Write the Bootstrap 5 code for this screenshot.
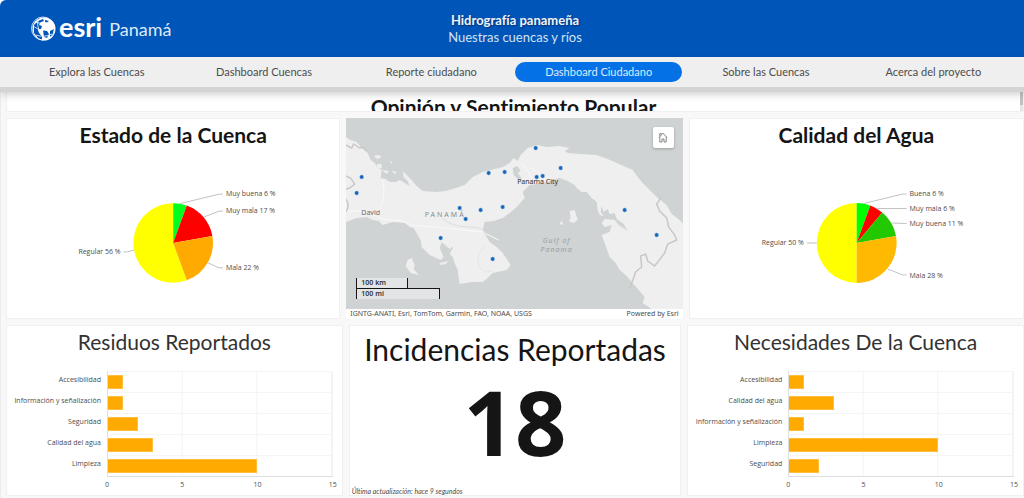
<!DOCTYPE html>
<html lang="es">
<head>
<meta charset="utf-8">
<meta name="viewport" content="width=device-width, initial-scale=1">
<title>Hidrografía panameña</title>
<link rel="stylesheet" href="https://cdn.jsdelivr.net/npm/bootstrap@5.3.0/dist/css/bootstrap.min.css">
<style>
  body { font-family: Lato, "Open Sans", sans-serif; font-variant-ligatures: none; color: #151515; background: #f8f8f8; min-height: 100vh; }
  .site-head { background: #0055b8; min-height: 57px; display: grid; grid-template-columns: 1fr auto 1fr; padding: 0 24px 0 30px; border-top-left-radius: 6px; color: #fff; }
  .corner { background: #fff; }
  .brand { color: #fff; gap: 2px; }
  .brand-name { font: 700 27px/32px Lato, sans-serif; margin-top: -4px; }
  .brand-country { font-size: 18px; line-height: 24px; margin-left: 5px; color: #dfeaf7; }
  .head-title { font-size: 13px; line-height: 17px; font-weight: 700; text-shadow: 1px 1px 2px #002f70; color: #eef4fb; }
  .head-sub { font-size: 13px; line-height: 17px; color: #d3e2f4; }
  .site-nav { background: #efefef; min-height: 30px; padding: 0 7px 0 13px; box-shadow: 0 5px 0 #d4d4d4, 0 6px 10px rgba(0,0,0,.25); z-index: 2; }
  .site-nav .nav-link { font-size: 11px; line-height: 20px; padding: 0; color: #4c4c4c; border-radius: 10px; text-align: center; }
  .site-nav .nav-link.active { background: #0571e6; color: #dcebfc; }
  .board { padding: 5px 0 2px 5px; border-left: 1px solid #ececec; gap: 6px; }
  .panel { background: #fff; border: 1px solid #f0f0f0; min-width: 0; }
  .banner { height: 20px; overflow: hidden; border-top: 0; }
  .banner-scroll { width: 3px; background: linear-gradient(#c1c1c1 13px, #e4e4e4 13px); }
  .panel-title { font-size: 21px; line-height: 24px; font-weight: 700; margin: 0; text-align: center; }
  .banner .panel-title { line-height: 30px; }
  .panel-title.light { font-weight: 400; color: #323232; }
  .grid-top { display: grid; grid-template-columns: 335fr 337fr 336fr; gap: 6px; }
  .grid-low { display: grid; grid-template-columns: 337fr 333fr 337fr; gap: 6px; }
  .pie { height: 164px; width: 100%; display: block; }
  .pie text { font-family: "Open Sans", sans-serif; font-size: 7px; fill: #4c4c4c; }
  .pie polyline { fill: none; stroke: #c2c2c2; stroke-width: 1; }
  .map-box { height: 191px; }
  .map-art { width: 100%; height: 100%; display: block; }
  .map-art text { font-family: "Noto Sans", sans-serif; }
  .home-btn { top: 9px; right: 9px; width: 21px; height: 21px; padding: 0; border-radius: 2px; background: #fff; border: 0; box-shadow: 0 1px 3px rgba(0,0,0,.25); }
  .scale-bar { left: 10px; bottom: 10px; font: 600 7px/10px "Noto Sans", sans-serif; color: #323232; }
  .scale-bar div { border: solid #151515; padding-left: 4px; background: rgba(255,255,255,.4); }
  .scale-bar .scale-km { width: 52px; border-width: 0 1px 0 1px; }
  .scale-bar .scale-mi { width: 84px; border-width: 1px 1px 0 1px; }
  .credits { font: 7px/10px "Noto Sans", sans-serif; color: #4c4c4c; padding: 0 4px; }
  .bars { display: grid; grid-template-columns: 100px 1fr; padding: 17px 9px 0 0; }
  .bar-label { font: 7px/18px "Open Sans", sans-serif; text-align: right; padding-right: 6px; color: #4c4c4c; height: 21px; white-space: nowrap; }
  .bar-cell { height: 21px; border-top: 1px solid #f5f5f5; border-left: 1px solid #dedede; border-right: 1px solid #f3f3f3; padding-top: 3px;
    background: linear-gradient(90deg, transparent calc(100% - 1px), #f3f3f3 0) 0 0 / 33.33% 100%; }
  .bar-fill { height: 14px; background: #ffaa00; border: 1px solid #ffbe3c; border-left: 0; }
  .bar-axis { grid-column: 2; border-top: 1px solid #dedede; padding-top: 3px; }
  .bar-axis span { width: 0; display: flex; justify-content: center; font: 7px/9px "Open Sans", sans-serif; color: #4c4c4c; }
  .count-title { font-size: 30px; line-height: 36px; margin: 5px 0 0; font-weight: 400; }
  .count { font: 700 90px/90px "Open Sans", sans-serif; padding-bottom: 12px; }
  .updated { font-size: 7px; line-height: 8px; font-style: italic; padding-left: 2px; color: #4c4c4c; }
</style>
</head>
<body class="d-flex flex-column">
<div class="corner">
<header class="site-head align-items-center">
  <a href="#" class="brand d-flex align-items-center text-decoration-none">
    <svg width="27" height="27" viewBox="0 0 27 27" aria-hidden="true">
      <circle cx="14" cy="14" r="11.5" fill="#fff"/>
      <g fill="#0055b8"><path d="M4 10l4-4 5-2 1 2-3 1-2 3 3 1-1 3-3 1 1 3 3 3v4l-4-2-4-5zM15 5l4 1-2 2-2-1zM13 15l4 1 2 3-2 4-3-1zM20 16l4-2-1 6-3 2z"/></g>
      <g fill="none" stroke="#fff" stroke-width=".8"><circle cx="13" cy="13.500" r="11.500"/><path d="M3 11q10 8 21 1M6 20q8 3 16-1M8 4q-2 12 7 20M5 7q8 3 16-1"/></g>
    </svg>
    <span class="brand-name">esri</span><span class="brand-country">Panamá</span>
  </a>
  <div class="text-center">
    <div class="head-title">Hidrografía panameña</div>
    <div class="head-sub">Nuestras cuencas y ríos</div>
  </div>
</header>
</div>
<nav class="site-nav nav nav-pills flex-nowrap align-items-center position-relative">
  <div class="col"><a class="nav-link" href="#">Explora las Cuencas</a></div>
  <div class="col"><a class="nav-link" href="#">Dashboard Cuencas</a></div>
  <div class="col"><a class="nav-link" href="#">Reporte ciudadano</a></div>
  <div class="col"><a class="nav-link active" aria-current="page" href="#">Dashboard Ciudadano</a></div>
  <div class="col"><a class="nav-link" href="#">Sobre las Cuencas</a></div>
  <div class="col"><a class="nav-link" href="#">Acerca del proyecto</a></div>
</nav>
<main class="board d-flex flex-column flex-grow-1">
  <section class="panel banner d-flex">
    <h1 class="panel-title flex-grow-1">Opinión y Sentimiento Popular</h1>
    <div class="banner-scroll"></div>
  </section>
  <div class="grid-top">
    <section class="panel">
      <h2 class="panel-title pt-1">Estado de la Cuenca</h2>
      <svg class="pie" viewBox="0 0 334 164" role="img" aria-label="Estado de la Cuenca">
        <g transform="translate(167 96)">
          <path fill="#ffff00" d="M0 0L13.700 37.600A40 40 0 1 1 0-40z"/>
          <path fill="#00ff1e" d="M0 0V-40A40 40 0 0 1 13.700-37.600z"/>
          <path fill="#ff0000" d="M0 0L13.700-37.600A40 40 0 0 1 39.400-7z"/>
          <path fill="#ffaa00" d="M0 0L39.400-7A40 40 0 0 1 13.700 37.600z"/>
          <polyline points="7,-39.500 46,-49 50,-49"/><polyline points="31,-26 46,-32 50,-32"/>
          <polyline points="35,20 46,25 50,25"/><polyline points="-39,7 -46,9 -50,9"/>
          <text x="53" y="-47">Muy buena 6 %</text><text x="53" y="-30">Muy mala 17 %</text>
          <text x="53" y="27">Mala 22 %</text><text x="-53" y="11" text-anchor="end">Regular 56 %</text>
        </g>
      </svg>
    </section>
    <section class="panel border-0">
      <div class="map-box position-relative">
        <svg class="map-art" viewBox="0 0 337 191" preserveAspectRatio="xMidYMid slice" role="img" aria-label="Mapa de Panamá">
          <path fill="#cfd3d4" d="M-50-50H400V250H-50z"/>
          <g fill="#efefef">
            <path d="M-9 14L0 19 5 22 11 24 15 29 22 35 25 42 29 45 32 50 36 52 35 60 40 61 44 64 50 64 54 62 59 65 64 68 62 63 58 59 57 53 62 58 66 62 71 68 77 73 91 74 100 73 107 71 119 67 124 62 127 59 137 54 157 49 164 45 168 40 172 43 175 37 182 30 191 27 201 29 213 28 224 30 219 33 222 35 234 36 251 37 262 41 271 45 287 52 292 59 297 65 304 72 311 79 321 87 326 96 334 102 346 115V200H310L306 191 297 185 299 179 287 165 281 158 274 152 270 145 264 139 260 128 256 117 264 114 266 107 259 109 256 105 261 99 254 97 252 92 251 84 246 80 241 74 236 74 231 70 229 67 222 63 214 60 201 64 193 66 184 67 177 74 179 80 171 89 164 95 157 100 148 103 139 104 137 112 144 124 151 129 157 135 161 141 165 147 161 152 147 155 142 160 137 164 126 164 114 166 112 152 109 145 107 139 104 136 108 128 104 131 96 124 94 130 98 139 95 142 84 137 76 129 75 122 72 117 68 110 64 109 59 105 47 104 37 107 33 103 27 102 21 99 11 100 0 104-9 104z"/>
            <path d="M62 142l4-2 3 7-1 4 5 6-8-2-5-7zM224 93l5-1 3 10-4 3-5-2 2-3zM215 104l2-1v4l-3-1zM28 38l5-1 3 2-4 2zM31 46l5 0 0 4-4 1zM44 43l3 1-1 2zM36 52l7 1-2 3zM46 53l5 1-2 2zM94 145l9-2-3 3-6 1z"/>
          </g>
          <g fill="#cfd3d4"><path d="M167 50l5-2 3 5-3 2 4 5-3 2-5-5zM256 88l2 6 4-3 2 5 5-1 2 6 7 5 4 7-8-5-5-6-9-1-5-7z"/></g>
          <g fill="none" stroke="#fafafa" stroke-width="1"><path d="M0 93Q20 92 28 97T47 102 66 107L100 110 137 114 153 122M176 45q7 8 10 16M200 62q-8-10-15-12M37 62q3 12 0 22T29 95"/><path stroke="#dedede" d="M97 100q9 9 26 9t16 7M268 101q6 8 14 11"/><path stroke="#e6e6e6" d="M140 128q-10 8-7 18t14 7"/></g>
          <g fill="none" stroke="#c9c8c6" stroke-width="1.500"><path d="M0 27l6 3 2-4 6 4 3-1 4 4M0 58l5 2 4 6-5 4-4 1M0 81q5 6 0 13M315 80l-4 6 3 7 7 7 2 9 6 8 2 5-9 4-3 9-10 13-7-5-2-7-5 2 1 11-6 5-6 17"/></g>
          <g fill="#1566b8" stroke="#e8f0f8" stroke-width=".500">
            <circle cx="16" cy="59" r="2.200"/><circle cx="11" cy="75" r="2.200"/><circle cx="114" cy="90" r="2.200"/><circle cx="120" cy="101" r="2.200"/><circle cx="135" cy="92" r="2.200"/><circle cx="157" cy="89" r="2.200"/><circle cx="143" cy="55" r="2.200"/><circle cx="159" cy="54" r="2.200"/><circle cx="95" cy="120" r="2.200"/><circle cx="147" cy="141" r="2.200"/><circle cx="190" cy="30" r="2.200"/><circle cx="215" cy="50" r="2.200"/><circle cx="191" cy="59" r="2.200"/><circle cx="197" cy="58" r="2.200"/><circle cx="279" cy="92" r="2.200"/><circle cx="311" cy="117" r="2.200"/>
          </g>
          <text x="25" y="97" font-size="7" text-anchor="middle" fill="#6b6b6b">David</text>
          <text x="79" y="99" font-size="7" fill="#8c8c8c" style="letter-spacing:2px">PANAMÁ</text>
          <text x="192" y="66" font-size="7" text-anchor="middle" fill="#323232">Panama City</text>
          <g font-size="7" font-style="italic" fill="#9a9fa1" text-anchor="middle" style="letter-spacing:1px"><text x="211" y="125">Gulf of</text><text x="211" y="134">Panama</text></g>
        </svg>
        <button type="button" class="home-btn btn position-absolute d-flex align-items-center justify-content-center" aria-label="Inicio">
          <svg width="10" height="11" viewBox="0 0 10 11" fill="none" stroke="#6a6a6a" stroke-width=".800"><path d="M1 5.500L5 1.200 9 5.500M1.800 4.700V10H4V7h2v3h2.200V4.700M1.800 4V1.500h1.400v1"/></svg>
        </button>
        <div class="scale-bar position-absolute"><div class="scale-km">100 km</div><div class="scale-mi">100 mi</div></div>
      </div>
      <div class="credits d-flex justify-content-between"><span>IGNTG-ANATI, Esri, TomTom, Garmin, FAO, NOAA, USGS</span><span>Powered by Esri</span></div>
    </section>
    <section class="panel">
      <h2 class="panel-title pt-1">Calidad del Agua</h2>
      <svg class="pie" viewBox="0 0 334 164" role="img" aria-label="Calidad del Agua">
        <g transform="translate(167 96)">
          <path fill="#ffff00" d="M0 40A40 40 0 0 1 0-40z"/>
          <path fill="#00ff00" d="M0 0V-40A40 40 0 0 1 13.700-37.600z"/>
          <path fill="#ff0000" d="M0 0L13.700-37.600A40 40 0 0 1 25.700-30.600z"/>
          <path fill="#22c800" d="M0 0L25.700-30.600A40 40 0 0 1 39.400-7z"/>
          <path fill="#ffb900" d="M0 0L39.400-7A40 40 0 0 1 0 40z"/>
          <polyline points="7,-39.500 46,-49 50,-49"/><polyline points="20,-34.500 50,-34.500"/><polyline points="35,-20 50,-19.500"/>
          <polyline points="31,26 46,32 50,32"/><polyline points="-40,0 -50,0"/>
          <text x="53" y="-47">Buena 6 %</text><text x="53" y="-32">Muy mala 6 %</text><text x="53" y="-17">Muy buena 11 %</text>
          <text x="53" y="35">Mala 28 %</text><text x="-53" y="2" text-anchor="end">Regular 50 %</text>
        </g>
      </svg>
    </section>
  </div>
  <div class="grid-low flex-grow-1">
    <section class="panel">
      <h2 class="panel-title light pt-1">Residuos Reportados</h2>
      <div class="bars">
        <div class="bar-label">Accesibilidad</div><div class="bar-cell"><div class="bar-fill" style="width:6.67%"></div></div>
        <div class="bar-label">Información y señalización</div><div class="bar-cell"><div class="bar-fill" style="width:6.67%"></div></div>
        <div class="bar-label">Seguridad</div><div class="bar-cell"><div class="bar-fill" style="width:13.33%"></div></div>
        <div class="bar-label">Calidad del agua</div><div class="bar-cell"><div class="bar-fill" style="width:20%"></div></div>
        <div class="bar-label">Limpieza</div><div class="bar-cell"><div class="bar-fill" style="width:66.67%"></div></div>
        <div class="bar-axis d-flex justify-content-between"><span>0</span><span>5</span><span>10</span><span>15</span></div>
      </div>
    </section>
    <section class="panel d-flex flex-column text-center">
      <h2 class="count-title">Incidencias Reportadas</h2>
      <div class="count flex-grow-1 d-flex align-items-center justify-content-center">18</div>
      <div class="updated text-start">Última actualización: hace 9 segundos</div>
    </section>
    <section class="panel">
      <h2 class="panel-title light pt-1">Necesidades De la Cuenca</h2>
      <div class="bars">
        <div class="bar-label">Accesibilidad</div><div class="bar-cell"><div class="bar-fill" style="width:6.67%"></div></div>
        <div class="bar-label">Calidad del agua</div><div class="bar-cell"><div class="bar-fill" style="width:20%"></div></div>
        <div class="bar-label">Información y señalización</div><div class="bar-cell"><div class="bar-fill" style="width:6.67%"></div></div>
        <div class="bar-label">Limpieza</div><div class="bar-cell"><div class="bar-fill" style="width:66.67%"></div></div>
        <div class="bar-label">Seguridad</div><div class="bar-cell"><div class="bar-fill" style="width:13.33%"></div></div>
        <div class="bar-axis d-flex justify-content-between"><span>0</span><span>5</span><span>10</span><span>15</span></div>
      </div>
    </section>
  </div>
</main>
<script src="https://cdn.jsdelivr.net/npm/bootstrap@5.3.0/dist/js/bootstrap.bundle.min.js"></script>
</body>
</html>
